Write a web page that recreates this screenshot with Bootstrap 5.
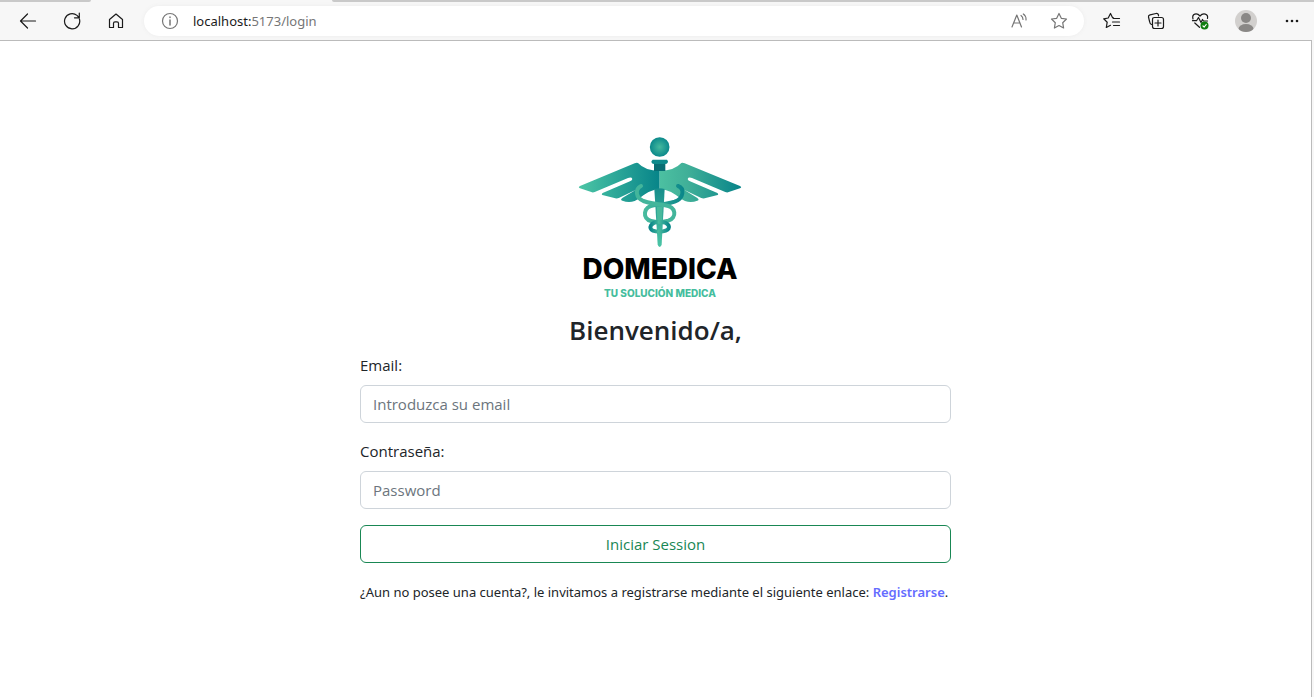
<!DOCTYPE html>
<html lang="es">
<head>
<meta charset="utf-8">
<meta name="viewport" content="width=device-width, initial-scale=1">
<title>Domedica</title>
<link href="https://cdn.jsdelivr.net/npm/bootstrap@5.3.0/dist/css/bootstrap.min.css" rel="stylesheet">
<style>
  body { font-family: "Open Sans", "Noto Sans", sans-serif; font-size: 15px; line-height: 24px; background: #f7f7f7; }
  svg { display: block; fill: none; stroke: #1b1b1b; stroke-width: 1.2; stroke-linecap: round; stroke-linejoin: round; }
  .tab-strip { height: 2px; }
  .tab-edge { background: #c9c9c9; }
  .tab-left { width: 91px; border-bottom-right-radius: 3px; }
  .tab-gap { width: 241px; }
  .tab-right { border-bottom-left-radius: 3px; }
  .toolbar { height: 38px; padding-left: 6px; }
  .tool { width: 44px; height: 32px; padding: 0; border: 0; background: none; display: flex; align-items: center; justify-content: center; }
  .tool-profile { width: 48px; }
  .tool-small { width: 40px; }
  .address { height: 30px; margin: 0 6px; padding: 0 5px 0 6px; box-shadow: 0 0 4px #ececec; }
  .address svg { stroke: #767676; }
  .url { font-family: "Noto Sans", "Open Sans", sans-serif; font-size: 13px; color: #767676; margin-left: 3px; }
  .url b { font-weight: 400; color: #1b1b1b; }
  .page { margin-right: 2px; border-top: 1px solid #bbb; border-right: 1px solid #bbb; }
  .login { max-width: 591px; padding-top: 93px; }
  .logo { padding-left: 9px; }
  .logo svg { stroke: none; }
  .brand { font: 800 28px/32px Inter, sans-serif; color: #000; margin-top: 5px; }
  .tagline { font: 800 10px/16px Inter, sans-serif; color: #45bd9d; }
  .welcome { font-size: 26px; line-height: 34px; font-weight: 600; margin: 12px 0 6px; }
  .form-label { margin-bottom: 8px; }
  .form-control, .login-btn { font-size: 15px; line-height: 24px; }
  .form-control { border-color: #ced4da; }
  .form-control::placeholder { color: #6c757d; }
  .signup { font-family: "Noto Sans", "Open Sans", sans-serif; font-size: 13px; line-height: 26px; }
  .signup a { color: #646cff; font-weight: 600; text-decoration: none; }
</style>
</head>
<body class="d-flex flex-column min-vh-100">
<header>
  <div class="tab-strip d-flex">
    <div class="tab-edge tab-left"></div><div class="tab-gap"></div><div class="tab-edge tab-right flex-grow-1"></div>
  </div>
  <nav class="toolbar d-flex align-items-center" aria-label="Navegador">
    <button class="tool" aria-label="Atrás"><svg width="18" height="18"><path d="M16.500 9H1.500M8.500 2L1.500 9l7 7"/></svg></button>
    <button class="tool" aria-label="Recargar"><svg width="18" height="18"><path d="M16.400 7A7.600 7.600 0 1 1 14 3.400L16 5.500M16.300 1v4.800h-4.800"/></svg></button>
    <button class="tool" aria-label="Inicio"><svg width="18" height="18"><path d="M2.500 7.500L9 2l6.500 5.500v8h-4v-4.200a1.500 1.500 0 0 0-1.500-1.500H8a1.500 1.500 0 0 0-1.500 1.500v4.200h-4z"/></svg></button>
    <div class="address d-flex align-items-center flex-grow-1 bg-white rounded-pill">
      <button class="tool tool-small" aria-label="Información"><svg width="18" height="18"><circle cx="9" cy="9" r="7.500"/><path d="M9 8v5M9 5v.5" stroke-width="1.500"/></svg></button>
      <span class="url flex-grow-1"><b>localhost:</b>5173/login</span>
      <button class="tool tool-small" aria-label="Leer en voz alta"><svg width="18" height="18"><path d="M2 15L6.800 3l4.700 12M3.700 11h6.200M11 3.500q2 1.500 2 4M13.300 2q3 2 2.700 6"/></svg></button>
      <button class="tool tool-small" aria-label="Favorito"><svg width="18" height="18"><path d="M9 1.500l2.300 4.800 5.200.7-3.800 3.700.9 5.300L9 13.500 4.400 16l.9-5.300L1.500 7l5.200-.7z"/></svg></button>
    </div>
    <button class="tool" aria-label="Favoritos"><svg width="18" height="18"><path d="M10.500 5.800h-.9L7.500 1.500 5.200 6l-4.500.8L4.200 10.200l-.9 5.300 4.200-2.200M10.500 6.500h6M9.500 10h7M10.500 13.500h6"/></svg></button>
    <button class="tool" aria-label="Colecciones"><svg width="18" height="18"><path d="M4.500 12.500Q3 12 2.700 10L1.500 5Q1.200 3.300 3 2.800L9 1.500Q11 1.200 11.500 3v.8M7.500 5.500h7q2 0 2 2v7q0 2-2 2h-7q-2 0-2-2v-7q0-2 2-2zM11 8v6M8 11h6"/></svg></button>
    <button class="tool" aria-label="Rendimiento"><svg width="18" height="18"><path d="M2 7C.5 1.500 6 .5 9 4c3-3.500 8.500-2.500 7.500 2.500M1.500 8.700h4L7.500 5.500l2.500 5 1.500-3 1 1.500h4M3.800 11l4.700 4.300"/><circle cx="13.500" cy="13.500" r="4" fill="#107c10" stroke="none"/><path d="M12 14l1.200 1 2-2.500" stroke="#fff"/></svg></button>
    <button class="tool tool-profile" aria-label="Perfil"><svg width="22" height="22"><defs><clipPath id="face"><circle cx="11" cy="11" r="11"/></clipPath></defs><g stroke="none"><circle cx="11" cy="11" r="11" fill="#d2d0ce"/><g clip-path="url(#face)" fill="#8a8886"><circle cx="11" cy="8" r="5"/><ellipse cx="11" cy="19" rx="7.500" ry="5"/></g></g></svg></button>
    <button class="tool" aria-label="Más"><svg width="18" height="18"><g fill="#1b1b1b" stroke="none"><circle cx="4" cy="9" r="1.300"/><circle cx="9" cy="9" r="1.300"/><circle cx="14" cy="9" r="1.300"/></g></svg></button>
  </nav>
</header>
<main class="page bg-white flex-grow-1">
  <div class="login w-100 mx-auto">
    <div class="logo d-flex flex-column align-items-center">
      <svg width="166" height="114" viewBox="21 12 498 342" role="img" aria-label="Domedica">
        <defs>
          <linearGradient id="wingL"><stop offset="0" stop-color="#4cc5a5"/><stop offset="1" stop-color="#078489"/></linearGradient>
          <linearGradient id="wingR"><stop offset="0" stop-color="#4cc0a1"/><stop offset=".35" stop-color="#40af98"/><stop offset="1" stop-color="#078489"/></linearGradient>
          <radialGradient id="orb"><stop offset="0" stop-color="#45b99e"/><stop offset="1" stop-color="#0b898b"/></radialGradient>
          <linearGradient id="staff" x2="0" y2="1"><stop offset="0" stop-color="#168d8b"/><stop offset="1" stop-color="#4cc5a5"/></linearGradient>
          <linearGradient id="snakeR"><stop offset="0" stop-color="#48bb9e"/><stop offset="1" stop-color="#0b878a"/></linearGradient>
          <linearGradient id="snakeL"><stop offset="0" stop-color="#0b878a"/><stop offset="1" stop-color="#48bb9e"/></linearGradient>
        </defs>
        <circle cx="269" cy="51" r="29.500" fill="url(#orb)"/>
        <path fill="url(#wingL)" d="M269 123Q225 122 204 99Q200 97 194 100L30 168Q23 172 30 175L66 187Q70 188 76 185L174 144Q185 140 187 147Q187 151 180 154L98 189Q92 194 100 196L136 205Q142 206 148 203L198 179L158 203Q149 209 157 212Q176 220 194 213L205 207Q240 178 269 176z"/>
        <path fill="url(#wingR)" d="M269 123Q313 122 334 99Q338 97 344 100L510 168Q517 172 510 175L474 187Q470 188 464 185L366 144Q355 140 353 147Q353 151 360 154L442 189Q448 194 440 196L404 205Q398 206 392 203L342 179L381 203Q390 209 382 212Q363 220 345 213L334 207Q299 178 269 176z"/>
        <path fill="#086d73" d="M252 99h34v24h-34z"/>
        <path fill="#0d898b" d="M248 89h43q5 5 2 9q-2 4-8 4h-32q-6 0-8-4q-3-4 3-9z"/>
        <path fill="url(#staff)" d="M253 177q16-4 31 0L275 343q-1 8-6 8t-6-8z"/>
        <g fill="none" stroke-width="12" stroke-linecap="round">
          <path stroke="url(#snakeR)" d="M324 168C344 175 342 205 314 215Q292 222 252 226C219 230 216 266 243 273Q254 276 269 276"/>
          <path stroke="#43b59b" d="M213 168C194 178 197 203 220 213Q242 221 285 226C320 231 321 263 295 272Q280 276 263 276"/>
          <path stroke="url(#snakeL)" d="M269 276C241 276 234 295 249 302Q256 305 269 305"/>
          <path stroke="url(#snakeR)" d="M269 276C300 276 304 296 287 302Q280 305 267 305"/>
        </g>
        <path fill="#48b99c" d="M260 230h18l-2 40h-14z"/>
      </svg>
      <div class="brand">DOMEDICA</div>
      <div class="tagline">TU SOLUCIÓN MEDICA</div>
    </div>
    <h1 class="welcome text-center">Bienvenido/a,</h1>
    <form>
      <div class="mb-3">
        <label class="form-label d-block" for="email">Email:</label>
        <input class="form-control" type="email" id="email" placeholder="Introduzca su email">
      </div>
      <div class="mb-3">
        <label class="form-label d-block" for="password">Contraseña:</label>
        <input class="form-control" type="password" id="password" placeholder="Password">
      </div>
      <button class="btn btn-outline-success login-btn w-100 mb-3" type="submit">Iniciar Session</button>
    </form>
    <p class="signup mb-0">¿Aun no posee una cuenta?, le invitamos a registrarse mediante el siguiente enlace: <a href="#">Registrarse</a>.</p>
  </div>
</main>
<script src="https://cdn.jsdelivr.net/npm/bootstrap@5.3.0/dist/js/bootstrap.bundle.min.js"></script>
</body>
</html>
